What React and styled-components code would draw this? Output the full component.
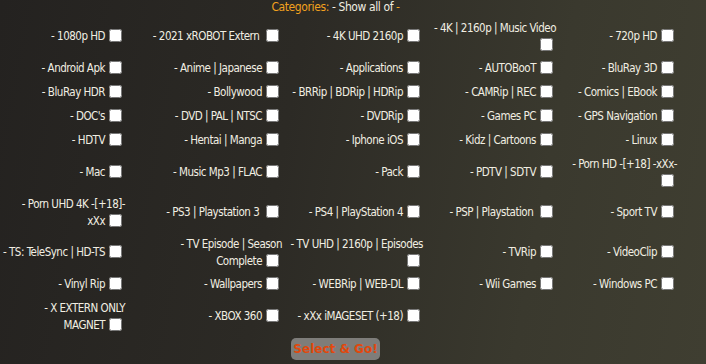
import React from 'react';
import styled, { createGlobalStyle } from 'styled-components';

const GlobalStyle = createGlobalStyle`
    html, body {
        margin: 0;
        padding: 0;
    }
    body {
        width: 706px;
        height: 364px;
        overflow: hidden;
        background: linear-gradient(100deg, #242220 0%, #2c2a25 40%, #3a392e 75%, #3f3e31 100%);
        font-family: "DejaVu Sans Condensed", "Liberation Sans Narrow", "Liberation Sans", sans-serif;
        color: #f1eee2;
    }
`;

const Panel = styled.form`
    width: 683px;
    margin-left: -6px;
    display: flex;
    flex-direction: column;
    align-items: center;
`;

const Header = styled.div`
    height: 17px;
    font-size: 12px;
    letter-spacing: -0.4px;
    line-height: 15px;
    color: #f1eee2;

    .cat {
        color: #f2a11e;
    }
`;

const Grid = styled.div`
    display: grid;
    grid-template-columns: 131px 157px 141px 133px 121px;
    align-items: center;
    width: 100%;
`;

const Cell = styled.label`
    display: block;
    box-sizing: border-box;
    min-height: 24px;
    text-align: right;
    font-size: 11.5px;
    letter-spacing: -0.5px;
    line-height: 17px;
    padding: 3px 0;
    white-space: nowrap;
`;

const Box = styled.input`
    width: 13px;
    height: 13px;
    margin: 0 3px 0 4px;
    vertical-align: -2px;
`;

const GoButton = styled.button`
    margin-top: 1px;
    width: 89px;
    height: 22px;
    padding: 0;
    border: none;
    border-radius: 5px;
    background: #7e7d7a;
    color: #e2480c;
    font-family: "DejaVu Sans", Verdana, sans-serif;
    font-weight: bold;
    font-size: 12px;
`;

// "\n" marks where the label breaks onto a second line
const rows = [
    ['1080p HD', '2021 xROBOT Extern ', '4K UHD 2160p', '4K | 2160p | Music Video\n', '720p HD'],
    ['Android Apk', 'Anime | Japanese', 'Applications', 'AUTOBooT', 'BluRay 3D'],
    ['BluRay HDR', 'Bollywood', 'BRRip | BDRip | HDRip', 'CAMRip | REC', 'Comics | EBook'],
    ["DOC's", 'DVD | PAL | NTSC', 'DVDRip', 'Games PC', 'GPS Navigation'],
    ['HDTV', 'Hentai | Manga', 'Iphone iOS', 'Kidz | Cartoons', 'Linux'],
    ['Mac', 'Music Mp3 | FLAC', 'Pack', 'PDTV | SDTV', 'Porn HD -[+18] -xXx-\n'],
    ['Porn UHD 4K -[+18]-\nxXx', 'PS3 | Playstation 3 ', 'PS4 | PlayStation 4', 'PSP | Playstation ', 'Sport TV'],
    ['TS: TeleSync | HD-TS', 'TV Episode | Season\nComplete', 'TV UHD | 2160p | Episodes\n', 'TVRip', 'VideoClip'],
    ['Vinyl Rip', 'Wallpapers', 'WEBRip | WEB-DL', 'Wii Games', 'Windows PC'],
    ['X EXTERN ONLY\nMAGNET', 'XBOX 360', 'xXx iMAGESET (+18)'],
];

const Label = ({ text }) => {
    const parts = ('- ' + text).split('\n');
    return parts.map((p, k) => (
        <React.Fragment key={k}>
            {k > 0 && <br />}
            {p}
        </React.Fragment>
    ));
};

const App = () => {
    return (
        <>
            <GlobalStyle />
            <Panel onSubmit={(e) => e.preventDefault()}>
                <Header>
                    <span className='cat'>Categories:</span> - Show all of <span className='cat'>-</span>
                </Header>
                <Grid>
                    {rows.map((row, i) =>
                        row.map((name, j) => (
                            <Cell key={i + '-' + j}>
                                <Label text={name} />
                                <Box type='checkbox' name='cat' />
                            </Cell>
                        ))
                    )}
                </Grid>
                <GoButton type='submit'>Select &amp; Go!</GoButton>
            </Panel>
        </>
    );
};

export default App;
